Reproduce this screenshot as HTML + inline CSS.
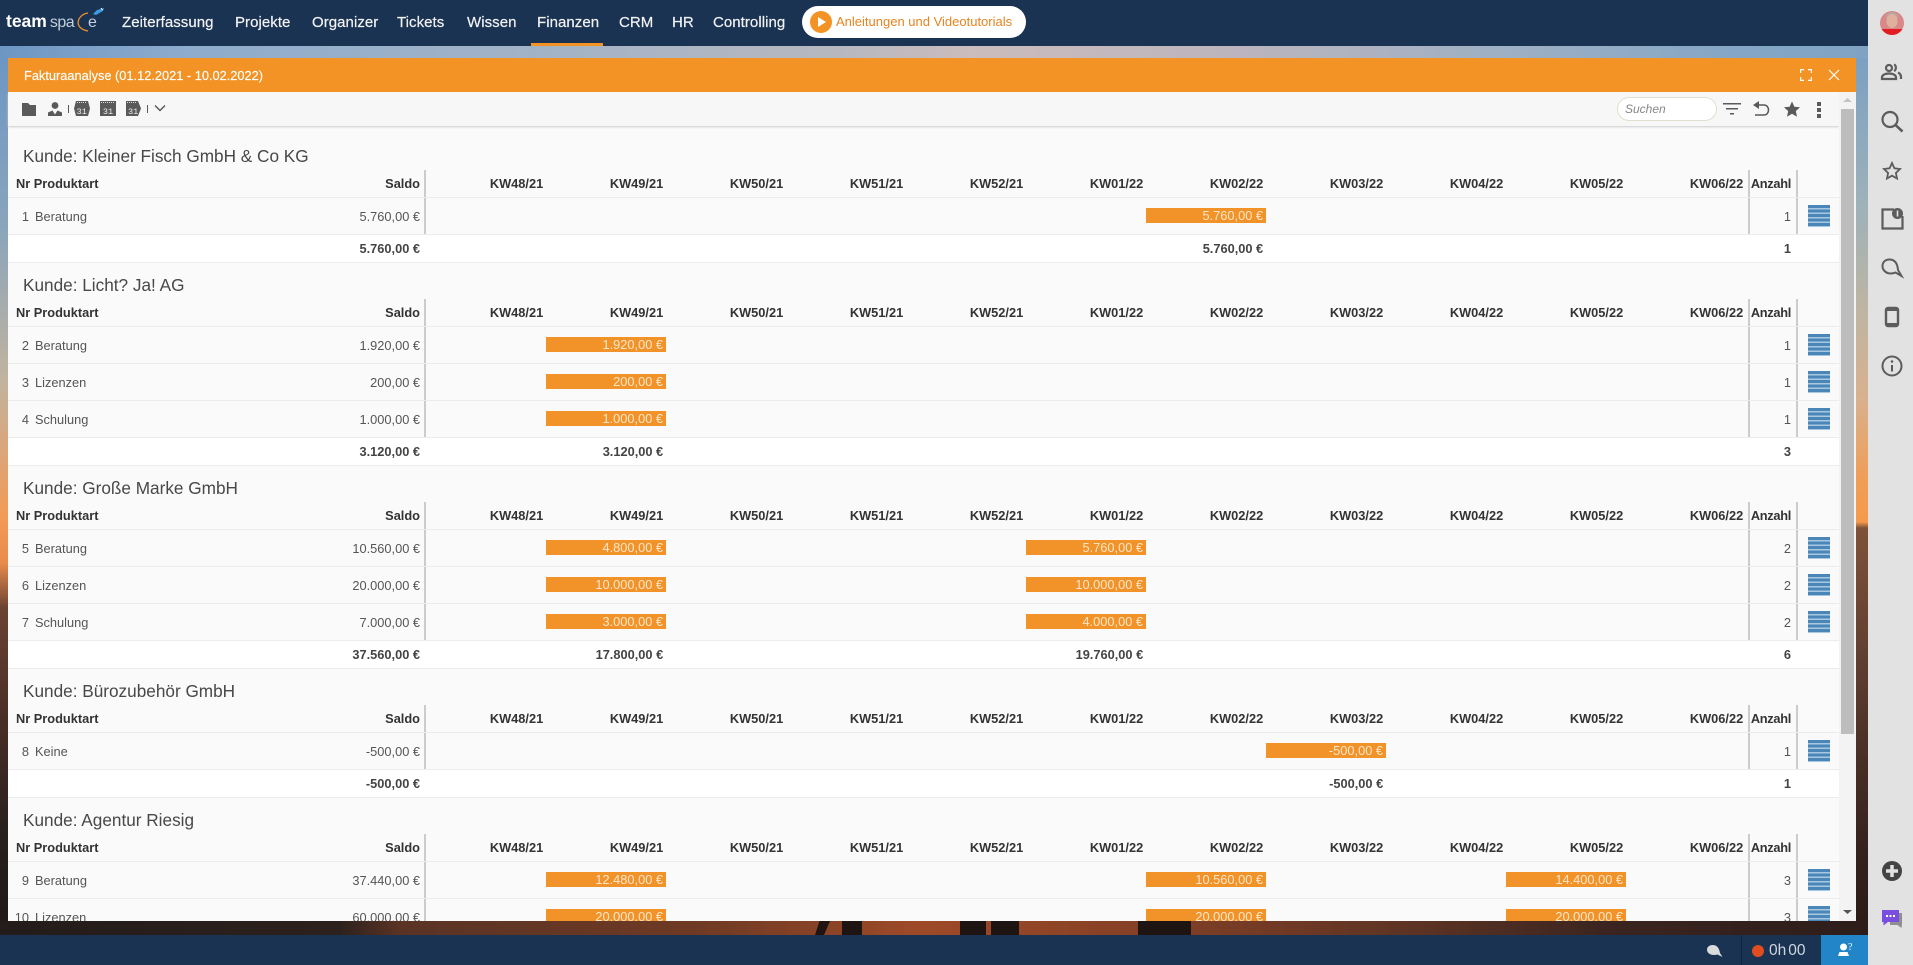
<!DOCTYPE html>
<html lang="de"><head><meta charset="utf-8"><title>Fakturaanalyse</title>
<style>
html,body{margin:0;padding:0;width:1913px;height:965px;overflow:hidden;background:#1a3352}
*{box-sizing:border-box}
body{font-family:"Liberation Sans",Arial,sans-serif;position:relative}
.a{position:absolute}
#nav{left:0;top:0;width:1868px;height:46px;background:#1a3352}
#nav span{position:absolute;top:0;line-height:45px;font-size:15px;letter-spacing:.05px;color:#f2f2f2;-webkit-text-stroke:.2px #f2f2f2;white-space:nowrap}
#win{left:8px;top:58px;width:1848px;height:863px;overflow:hidden;background:#fafafa}
#in{left:-8px;top:-58px;width:1913px;height:965px}
.s{position:absolute;left:8px;width:1831px;top:0;height:1px}
.t{position:absolute;left:15px;top:8px;line-height:28px;font-size:17.2px;color:#484848;white-space:nowrap}
.h,.r,.f{position:absolute;left:0;width:1831px;font-size:12.8px;white-space:nowrap}
.h,.r{background-image:linear-gradient(#ccc,#ccc),linear-gradient(#ccc,#ccc),linear-gradient(#ccc,#ccc);background-size:2px 100%;background-repeat:no-repeat;background-position:416px 0,1740px 0,1788px 0}
.h{top:36px;height:28.2px;border-bottom:1px solid #ececec;font-weight:bold;color:#333;line-height:28px}
.r{height:37px;border-bottom:1px solid #ececec;color:#555;line-height:37px;background-color:#fafafa}
.f{height:28px;background:#fff;border-bottom:1px solid #ececec;font-weight:bold;color:#444;line-height:28px}
.h b,.r em,.f b,.k,.b{position:absolute;top:0;font-style:normal;font-weight:inherit}
.nr{left:8px}
.no{width:21px;left:0;text-align:right}
.pr{left:27px}
.sa{right:1419px;text-align:right}
.an{right:48px;text-align:right}
.h .an{letter-spacing:-.3px}
.k{text-align:right;width:118.2px}
.c0{left:417px}.c1{left:537px}.c2{left:657px}.c3{left:777px}.c4{left:897px}.c5{left:1017px}.c6{left:1137px}.c7{left:1257px}.c8{left:1377px}.c9{left:1497px}.c10{left:1617px}
.r .b{position:absolute;top:10px;width:120px;height:15px;margin-left:1px;background:#f2932a;color:#fde6c8;line-height:15px;text-align:right;padding-right:3px;font-style:normal;font-weight:normal}
.l{position:absolute;left:1800px;top:7px;width:22px;height:22px;background:repeating-linear-gradient(#4a86b8 0,#4a86b8 3px,#a8c8e2 3px,#a8c8e2 4.5px)}
#ttl{left:8px;top:58px;width:1848px;height:34px;background:#f39325;z-index:3}
#ttl span{position:absolute;left:16px;top:0;line-height:36px;font-size:12.8px;color:#fff;-webkit-text-stroke:.15px #fff;white-space:nowrap}
#tb{left:8px;top:92px;width:1831px;height:34px;background:#f7f7f7;box-shadow:0 1px 2px #ccc;z-index:2}
#sb{left:1839px;top:92px;width:17px;height:829px;background:#f3f3f3;z-index:2}
svg{position:absolute;display:block}
</style></head><body>

<div class="a" style="left:0;top:46px;width:1868px;height:12px;background:linear-gradient(90deg,#6d96c4 0,#8eaccd 10%,#a4b3c6 30%,#b7b8bf 45%,#cbbcbd 52%,#bcb5bd 66%,#9fb0c4 80%,#86a7c6 92%,#80a3c4 100%)"></div>
<div class="a" style="left:0;top:58px;width:8px;height:863px;background:linear-gradient(#6d96c4 0,#8aa5bb 170px,#c0b3a0 320px,#f39a55 460px,#e98b4c 505px,#6b4232 550px,#4d3027 650px,#2a201d 770px,#201a18 863px)"></div>
<div class="a" style="left:1856px;top:58px;width:12px;height:863px;background:linear-gradient(#7ba0c2 0,#9eb2b9 150px,#c0b5a0 260px,#d8b18e 340px,#ef9e58 420px,#f59a4c 464px,#7e5238 470px,#6a4534 560px,#4d3228 680px,#33211c 800px,#2c1c18 863px)"></div>
<div class="a" style="left:0;top:921px;width:1868px;height:14px;background:linear-gradient(90deg,#231c1a 0,#2d211d 340px,#5a3325 400px,#6f3a24 700px,#9e4a28 920px,#8a4226 1100px,#5f3424 1400px,#3c2520 1600px,#2d1d1a 1868px)"></div>
<div class="a" style="left:815px;top:921px;width:15px;height:14px;background:#1e1512;clip-path:polygon(30% 0,100% 0,60% 100%,0 100%)"></div>
<div class="a" style="left:842px;top:921px;width:20px;height:14px;background:#1e1512"></div>
<div class="a" style="left:960px;top:921px;width:26px;height:14px;background:#1e1512"></div>
<div class="a" style="left:991px;top:921px;width:28px;height:14px;background:#1e1512"></div>
<div class="a" style="left:1138px;top:921px;width:53px;height:14px;background:#1e1512"></div>

<div class="a" id="nav">
  <div class="a" style="left:6px;top:0;line-height:43px;font-size:17.5px;color:#fff;white-space:nowrap"><b>team</b><span style="position:static;font-size:16px;line-height:43px;color:#c4cfdb;-webkit-text-stroke:0;letter-spacing:-.5px;margin-left:3px">spa</span></div>
  <svg style="left:70px;top:0" width="40" height="36" viewBox="0 0 40 36"><path d="M18 13C8 14 2 28 18 31" fill="none" stroke="#f0922a" stroke-width="1.300"/><path d="M23 14l4-4 7-2-1 3-7 4z" fill="#3d9ae0"/><path d="M31 8l1.500 2" stroke="#fff" stroke-width="1"/><text x="18" y="27" font-size="16" fill="#c4cfdb" font-family="Liberation Sans">e</text></svg>
  <span style="left:122px">Zeiterfassung</span>
  <span style="left:235px">Projekte</span>
  <span style="left:312px">Organizer</span>
  <span style="left:397px">Tickets</span>
  <span style="left:467px">Wissen</span>
  <span style="left:537px">Finanzen</span>
  <span style="left:619px">CRM</span>
  <span style="left:672px">HR</span>
  <span style="left:713px">Controlling</span>
  <div class="a" style="left:531px;top:43px;width:72px;height:3px;background:#f39325"></div>
  <div class="a" style="left:802px;top:6px;width:224px;height:32px;border-radius:16px;background:#fff">
    <div class="a" style="left:8px;top:5px;width:22px;height:22px;border-radius:50%;background:#f39325"></div>
    <svg style="left:8px;top:5px" width="22" height="22"><path d="M8 6l8 5-8 5z" fill="#fff"/></svg>
    <div class="a" style="left:34px;top:0;line-height:32px;font-size:13px;color:#e8831f;white-space:nowrap">Anleitungen und Videotutorials</div>
  </div>
</div>

<div class="a" id="ttl"><span>Fakturaanalyse (01.12.2021 - 10.02.2022)</span>
  <svg style="left:1792px;top:11px" width="12" height="12" fill="none" stroke="#fff" stroke-width="1.2"><path d="M.6 4V.6H4M8 .6h3.4V4M.6 8v3.4H4M8 11.4h3.4V8"/></svg>
  <svg style="left:1820px;top:11px" width="12" height="12" fill="none" stroke="#fff" stroke-width="1.2"><path d="M1 1l10 10M11 1L1 11"/></svg>
</div>

<div class="a" id="tb">
  <svg style="left:0;top:0" width="170" height="34" fill="#5a5a5a">
    <path d="M14 11h6l2 2h6v11H14z"/>
    <circle cx="47" cy="13.500" r="3.400"/><path d="M40 24v-3.500l4.500-2 2.500 4 2.500-4 4.500 2V24z"/>
    <rect x="60" y="13" width="1" height="8"/>
    <path d="M68 9h12l2 7.500-2 7.500H68l-2-7.500z"/><path d="M69 10.500h10" stroke="#ddd" stroke-width="1" stroke-dasharray="1 1"/><text x="68.600" y="22" font-size="8.500" fill="#eee" font-family="Liberation Mono">31</text>
    <rect x="92" y="9" width="16" height="15"/><path d="M93 10.500h14" stroke="#ddd" stroke-width="1" stroke-dasharray="1 1"/><text x="94.900" y="22" font-size="8.500" fill="#eee" font-family="Liberation Mono">31</text>
    <path d="M118 9h12l3 7.500-3 7.500h-12z"/><path d="M119 10.500h10" stroke="#ddd" stroke-width="1" stroke-dasharray="1 1"/><text x="120" y="22" font-size="8.500" fill="#eee" font-family="Liberation Mono">31</text>
    <rect x="139" y="13" width="1" height="8"/>
    <path d="M147 13.500l5 5 5-5" fill="none" stroke="#5a5a5a" stroke-width="1.500"/>
  </svg>
  <div class="a" style="left:1609px;top:5px;width:100px;height:24px;border:1px solid #e3dfce;border-radius:12px;background:#fff;color:#888;font-style:italic;font-size:12px;line-height:22px;padding-left:7px">Suchen</div>
  <svg style="left:1712px;top:0" width="115" height="34" fill="#5a5a5a">
    <path d="M3 11h18v1.500H3zM6 16h12v1.500H6zM10 21h4v1.500h-4z"/>
    <path d="M35 13h9c6 0 6 10 0 10h-9" fill="none" stroke="#5a5a5a" stroke-width="1.600"/><path d="M39 9v8l-6-4z"/>
    <path d="M72 9.500l2.400 5.200 5.600.6-4.200 3.800 1.200 5.600-5-2.900-5 2.900 1.200-5.600-4.200-3.800 5.600-.6z"/>
    <rect x="97" y="10" width="4" height="4"/><rect x="97" y="16" width="4" height="4"/><rect x="97" y="22" width="4" height="4"/>
  </svg>
</div>

<div class="a" id="sb">
  <div class="a" style="left:2px;top:17px;width:13px;height:625px;background:#bdbdbd"></div>
  <svg style="left:3px;top:5px" width="11" height="6"><path d="M1 5l4.500-4 4.500 4z" fill="#c4c4c4"/></svg>
  <svg style="left:3px;top:817px" width="11" height="6"><path d="M1 1h9L5.500 5z" fill="#555"/></svg>
</div>

<div class="a" id="win"><div class="a" id="in">

<div class="s" style="top:134px">
<div class="t">Kunde: Kleiner Fisch GmbH &amp; Co KG</div>
<div class="h"><b class="nr">Nr Produktart</b><b class="sa">Saldo</b><b class="k c0">KW48/21</b><b class="k c1">KW49/21</b><b class="k c2">KW50/21</b><b class="k c3">KW51/21</b><b class="k c4">KW52/21</b><b class="k c5">KW01/22</b><b class="k c6">KW02/22</b><b class="k c7">KW03/22</b><b class="k c8">KW04/22</b><b class="k c9">KW05/22</b><b class="k c10">KW06/22</b><b class="an">Anzahl</b></div>
<div class="r" style="top:64.200px"><em class="no">1</em><em class="pr">Beratung</em><em class="sa">5.760,00 €</em><i class="b c6">5.760,00 €</i><em class="an">1</em><div class="l"></div></div>
<div class="f" style="top:101.200px"><b class="sa">5.760,00 €</b><b class="k c6">5.760,00 €</b><b class="an">1</b></div>
</div>

<div class="s" style="top:263.100px">
<div class="t">Kunde: Licht? Ja! AG</div>
<div class="h"><b class="nr">Nr Produktart</b><b class="sa">Saldo</b><b class="k c0">KW48/21</b><b class="k c1">KW49/21</b><b class="k c2">KW50/21</b><b class="k c3">KW51/21</b><b class="k c4">KW52/21</b><b class="k c5">KW01/22</b><b class="k c6">KW02/22</b><b class="k c7">KW03/22</b><b class="k c8">KW04/22</b><b class="k c9">KW05/22</b><b class="k c10">KW06/22</b><b class="an">Anzahl</b></div>
<div class="r" style="top:64.200px"><em class="no">2</em><em class="pr">Beratung</em><em class="sa">1.920,00 €</em><i class="b c1">1.920,00 €</i><em class="an">1</em><div class="l"></div></div>
<div class="r" style="top:101.200px"><em class="no">3</em><em class="pr">Lizenzen</em><em class="sa">200,00 €</em><i class="b c1">200,00 €</i><em class="an">1</em><div class="l"></div></div>
<div class="r" style="top:138.200px"><em class="no">4</em><em class="pr">Schulung</em><em class="sa">1.000,00 €</em><i class="b c1">1.000,00 €</i><em class="an">1</em><div class="l"></div></div>
<div class="f" style="top:175.200px"><b class="sa">3.120,00 €</b><b class="k c1">3.120,00 €</b><b class="an">3</b></div>
</div>

<div class="s" style="top:466.200px">
<div class="t">Kunde: Große Marke GmbH</div>
<div class="h"><b class="nr">Nr Produktart</b><b class="sa">Saldo</b><b class="k c0">KW48/21</b><b class="k c1">KW49/21</b><b class="k c2">KW50/21</b><b class="k c3">KW51/21</b><b class="k c4">KW52/21</b><b class="k c5">KW01/22</b><b class="k c6">KW02/22</b><b class="k c7">KW03/22</b><b class="k c8">KW04/22</b><b class="k c9">KW05/22</b><b class="k c10">KW06/22</b><b class="an">Anzahl</b></div>
<div class="r" style="top:64.200px"><em class="no">5</em><em class="pr">Beratung</em><em class="sa">10.560,00 €</em><i class="b c1">4.800,00 €</i><i class="b c5">5.760,00 €</i><em class="an">2</em><div class="l"></div></div>
<div class="r" style="top:101.200px"><em class="no">6</em><em class="pr">Lizenzen</em><em class="sa">20.000,00 €</em><i class="b c1">10.000,00 €</i><i class="b c5">10.000,00 €</i><em class="an">2</em><div class="l"></div></div>
<div class="r" style="top:138.200px"><em class="no">7</em><em class="pr">Schulung</em><em class="sa">7.000,00 €</em><i class="b c1">3.000,00 €</i><i class="b c5">4.000,00 €</i><em class="an">2</em><div class="l"></div></div>
<div class="f" style="top:175.200px"><b class="sa">37.560,00 €</b><b class="k c1">17.800,00 €</b><b class="k c5">19.760,00 €</b><b class="an">6</b></div>
</div>

<div class="s" style="top:669.300px">
<div class="t">Kunde: Bürozubehör GmbH</div>
<div class="h"><b class="nr">Nr Produktart</b><b class="sa">Saldo</b><b class="k c0">KW48/21</b><b class="k c1">KW49/21</b><b class="k c2">KW50/21</b><b class="k c3">KW51/21</b><b class="k c4">KW52/21</b><b class="k c5">KW01/22</b><b class="k c6">KW02/22</b><b class="k c7">KW03/22</b><b class="k c8">KW04/22</b><b class="k c9">KW05/22</b><b class="k c10">KW06/22</b><b class="an">Anzahl</b></div>
<div class="r" style="top:64.200px"><em class="no">8</em><em class="pr">Keine</em><em class="sa">-500,00 €</em><i class="b c7">-500,00 €</i><em class="an">1</em><div class="l"></div></div>
<div class="f" style="top:101.200px"><b class="sa">-500,00 €</b><b class="k c7">-500,00 €</b><b class="an">1</b></div>
</div>

<div class="s" style="top:798.400px">
<div class="t">Kunde: Agentur Riesig</div>
<div class="h" style="height:27.400px"><b class="nr">Nr Produktart</b><b class="sa">Saldo</b><b class="k c0">KW48/21</b><b class="k c1">KW49/21</b><b class="k c2">KW50/21</b><b class="k c3">KW51/21</b><b class="k c4">KW52/21</b><b class="k c5">KW01/22</b><b class="k c6">KW02/22</b><b class="k c7">KW03/22</b><b class="k c8">KW04/22</b><b class="k c9">KW05/22</b><b class="k c10">KW06/22</b><b class="an">Anzahl</b></div>
<div class="r" style="top:63.400px"><em class="no">9</em><em class="pr">Beratung</em><em class="sa">37.440,00 €</em><i class="b c1">12.480,00 €</i><i class="b c6">10.560,00 €</i><i class="b c9">14.400,00 €</i><em class="an">3</em><div class="l"></div></div>
<div class="r" style="top:100.400px"><em class="no">10</em><em class="pr">Lizenzen</em><em class="sa">60.000,00 €</em><i class="b c1">20.000,00 €</i><i class="b c6">20.000,00 €</i><i class="b c9">20.000,00 €</i><em class="an">3</em><div class="l"></div></div>
</div>

</div></div>

<div class="a" style="left:0;top:935px;width:1868px;height:30px;background:#1a3352">
  <svg style="left:1706px;top:8px" width="18" height="16"><path d="M1 6.500C1 2 8 .5 11 3.500c2 2 2.500 4 3 6.500l2.500 4-5-2.500C6 13 1 11 1 6.500z" fill="#d9dbdd"/></svg>
  <div class="a" style="left:1741px;top:0;width:1px;height:30px;background:#10243e"></div>
  <div class="a" style="left:1752px;top:10px;width:12px;height:12px;border-radius:50%;background:#e04e1f"></div>
  <div class="a" style="left:1769px;top:0;line-height:32px;font-size:15.500px;color:#cfd6de;white-space:nowrap">0h<span style="margin-left:2px">00</span></div>
  <div class="a" style="left:1821px;top:0;width:47px;height:30px;background:#2285c8">
    <svg style="left:15px;top:6px" width="20" height="18" fill="#fff"><circle cx="7.500" cy="6" r="3.500"/><path d="M2 15l1.500-4h8l1.500 4z"/><text x="12" y="9" font-size="10" font-family="Liberation Serif">?</text></svg>
  </div>
</div>

<div class="a" style="left:1868px;top:0;width:45px;height:965px;background:#e2e2e2">
  <svg style="left:0;top:0" width="45" height="940" fill="none" stroke="#5c5c5c" stroke-width="2">
    <defs><clipPath id="av"><circle cx="24" cy="23" r="12"/></clipPath></defs>
    <g clip-path="url(#av)" stroke="none">
      <rect x="12" y="11" width="24" height="24" fill="#d9888a"/>
      <ellipse cx="24" cy="17" rx="6" ry="5" fill="#b8a6a0"/>
      <ellipse cx="24" cy="21" rx="5.500" ry="7" fill="#e0b09c"/>
      <rect x="12" y="29" width="24" height="7" fill="#e31b23"/>
    </g>
    <circle cx="21" cy="68" r="3" stroke-width="2.200"/><path d="M14 79v-1.500c0-2.500 3-4 7-4s7 1.500 7 4V79z" stroke-width="2.200"/>
    <path d="M26 64.500c2.500.8 2.500 5.500 0 6.500M33 79v-2c0-2-1-3.500-3-4.500" stroke-width="2.200"/>
    <circle cx="22" cy="119.500" r="7.500" stroke-width="2.200"/><path d="M27.500 125l7 6.500" stroke-width="2.600"/>
    <path d="M24 163l2.400 5.300 5.600.7-4.100 3.900 1.100 5.600-5-2.800-5 2.800 1.100-5.600-4.100-3.900 5.600-.7z" stroke-width="1.800"/>
    <path d="M26 209.500H14.500v19h20V216" stroke-width="2.200"/><circle cx="29.500" cy="213.500" r="5.500" fill="#5c5c5c" stroke="none"/><path d="M29.500 210.500v6" stroke="#e2e2e2" stroke-width="1.600"/>
    <path d="M21.500 259.500c-4.500 0-7 3-7 6.500 0 4.500 4 7.500 8 7.500 3 0 4-.5 5-1l6 3.500-3.500-6c-.5-6-3-10.500-8.500-10.500z" stroke-width="2"/>
    <rect x="18" y="308" width="12" height="18" rx="2" stroke-width="2.400"/><path d="M18 310h12M18 324h12" stroke-width="2"/>
    <circle cx="24" cy="366" r="9.500"/><path d="M24 365v6.500" stroke-width="2"/><circle cx="24" cy="361.500" r="1.300" fill="#5c5c5c" stroke="none"/>
    <circle cx="24" cy="871" r="10" fill="#444" stroke="none"/><path d="M24 865v12M18 871h12" stroke="#e2e2e2" stroke-width="3.500"/>
    <path d="M22 913h12v11l-.5 4-4-3H22z" fill="#8f8f8f" stroke="none"/>
    <path d="M14 910h17v12H20l-4.500 3.500V922H14z" fill="#7a4fe0" stroke="none"/><path d="M18 916h2M21.500 916h2M25 916h2" stroke="#fff" stroke-width="2"/>
  </svg>
</div>

</body></html>
